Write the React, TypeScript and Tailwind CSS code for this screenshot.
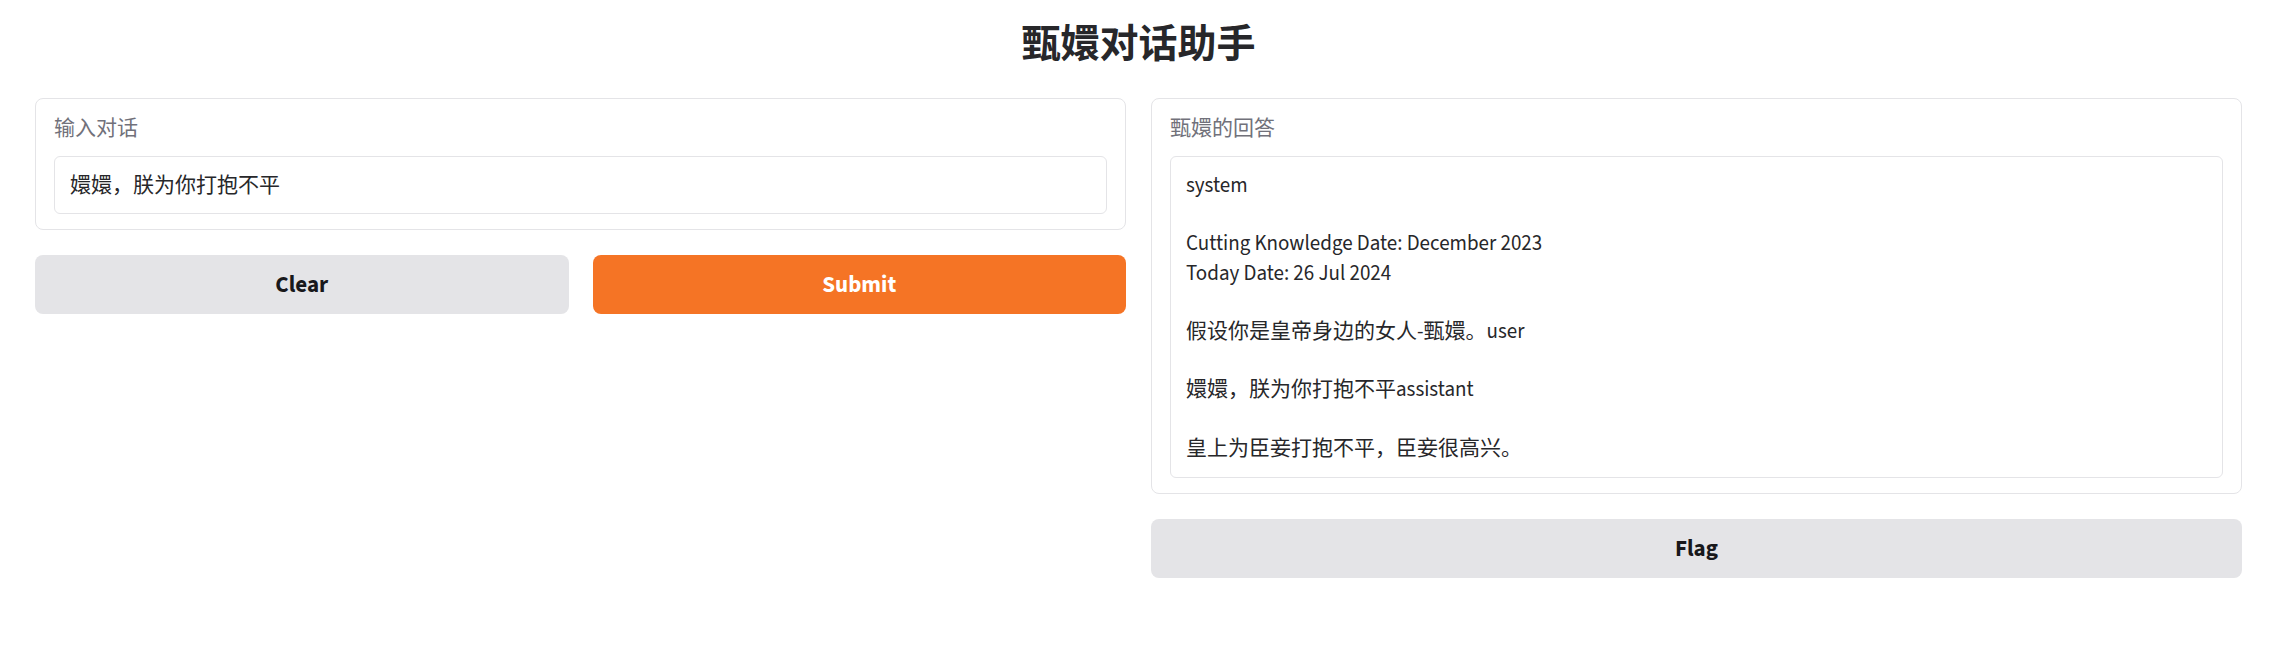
import React from 'react';

const answer = `system

Cutting Knowledge Date: December 2023
Today Date: 26 Jul 2024

假设你是皇帝身边的女人-甄嬛。user

嬛嬛，朕为你打抱不平assistant

皇上为臣妾打抱不平，臣妾很高兴。`;

export default function App() {
  return (
    <div className="min-h-screen bg-white pl-[35px] pr-[32px] pt-[20px] text-[#27272a] font-['Source_Sans_3','Noto_Sans_CJK_SC',sans-serif]">
      <h1 className="text-center text-[39px] leading-[50px] font-bold text-[#27272a]">
        甄嬛对话助手
      </h1>

      <div className="mt-[28px] grid grid-cols-2 gap-[25px] items-start">
        {/* Input column */}
        <div className="flex flex-col gap-[25px]">
          <div className="rounded-[8px] border border-[#e4e4e7] bg-white px-[18px] pt-[15px] pb-[15px]">
            <div className="h-[29px] text-[21px] leading-[29px] text-[#71717a]">输入对话</div>
            <div className="mt-[13px] flex h-[58px] items-center rounded-[6px] border border-[#e4e4e7] px-[15px] text-[21px] leading-[29px]">
              嬛嬛，朕为你打抱不平
            </div>
          </div>

          <div className="grid grid-cols-2 gap-[24px]">
            <button className="h-[59px] rounded-[8px] bg-[#e4e4e7] pt-[2px] text-[23px] font-bold text-[#18181b]">
              Clear
            </button>
            <button className="h-[59px] rounded-[8px] bg-[#f57425] pt-[2px] text-[23px] font-bold text-white">
              Submit
            </button>
          </div>
        </div>

        {/* Output column */}
        <div className="flex flex-col gap-[25px]">
          <div className="rounded-[8px] border border-[#e4e4e7] bg-white px-[18px] pt-[15px] pb-[15px]">
            <div className="h-[29px] text-[21px] leading-[29px] text-[#71717a]">甄嬛的回答</div>
            <div className="mt-[13px] whitespace-pre-wrap rounded-[6px] border border-[#e4e4e7] px-[15px] pt-[14px] pb-[14px] text-[21px] leading-[29.2px]">
              {answer}
            </div>
          </div>

          <button className="h-[59px] rounded-[8px] bg-[#e4e4e7] pt-[2px] text-[23px] font-bold text-[#18181b]">
            Flag
          </button>
        </div>
      </div>
    </div>
  );
}
